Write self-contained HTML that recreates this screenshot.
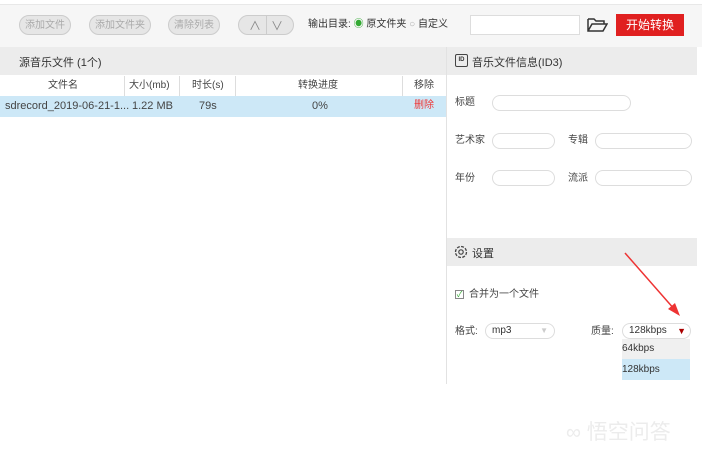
<!DOCTYPE html><html><head><meta charset="utf-8"><style>
*{margin:0;padding:0;box-sizing:border-box}
body{width:702px;height:456px;background:#fff;font-family:"Liberation Sans","Noto Sans CJK SC",sans-serif;font-size:11px;color:#333;position:relative;overflow:hidden}
.a{position:absolute}
.btn{position:absolute;top:15px;height:20px;border:1px solid #ccc;border-radius:10px;background:#e6e6e6;color:#aaa;font-size:10px;text-align:center}
.btn span{position:absolute;left:0;right:0;top:4px;line-height:12px}
.inp{position:absolute;height:16px;border:1px solid #ddd;border-radius:8px;background:#fff}
.lbl{position:absolute;font-size:10px;color:#444;line-height:1.2}
</style></head><body>
<div class="a" style="left:0;top:4px;width:702px;height:43px;background:#f6f6f6;border-top:1px solid #e8e8e8"></div>
<div class="btn" style="left:19px;width:52px"><span>添加文件</span></div>
<div class="btn" style="left:89px;width:62px"><span>添加文件夹</span></div>
<div class="btn" style="left:168px;width:52px"><span>清除列表</span></div>
<div class="btn" style="left:238px;width:56px;color:#888;font-size:12px"><span>∧ &nbsp;&nbsp;∨</span></div>
<div class="a" style="left:266px;top:16px;width:1px;height:18px;background:#ccc"></div>
<div class="lbl" style="left:308px;top:19px;color:#333">输出目录: <span style="color:#3a3">◉</span> 原文件夹 <span style="color:#aaa">○</span> 自定义</div>
<div class="a" style="left:470px;top:15px;width:110px;height:20px;border:1px solid #ddd;background:#fff"></div>
<svg class="a" style="left:586px;top:17px" width="22" height="16" viewBox="0 0 22 16"><path d="M2 2h6l2 2h8v3M2 2v12h15l4-7H6L2 14" fill="none" stroke="#333" stroke-width="1.5"/></svg>
<div class="a" style="left:616px;top:14px;width:68px;height:22px;background:#e02020;color:#fff;font-size:12px;text-align:center;line-height:22px">开始转换</div>
<div class="a" style="left:0;top:47px;width:446px;height:28px;background:#ececec"></div>
<div class="a" style="left:19px;top:54px;font-size:11px">源音乐文件 (1个)</div>
<div class="a" style="left:0;top:96px;width:446px;height:21px;background:#cde8f7"></div>
<div class="a" style="left:124px;top:76px;width:1px;height:20px;background:#ddd"></div>
<div class="a" style="left:179px;top:76px;width:1px;height:20px;background:#ddd"></div>
<div class="a" style="left:235px;top:76px;width:1px;height:20px;background:#ddd"></div>
<div class="a" style="left:402px;top:76px;width:1px;height:20px;background:#ddd"></div>
<div class="lbl" style="left:48px;top:80px">文件名</div>
<div class="lbl" style="left:129px;top:80px">大小(mb)</div>
<div class="lbl" style="left:192px;top:80px">时长(s)</div>
<div class="lbl" style="left:298px;top:80px">转换进度</div>
<div class="lbl" style="left:414px;top:80px">移除</div>
<div class="lbl" style="left:5px;top:100px;font-size:11px">sdrecord_2019-06-21-1...</div>
<div class="lbl" style="left:132px;top:100px;font-size:11px">1.22 MB</div>
<div class="lbl" style="left:199px;top:100px;font-size:11px">79s</div>
<div class="lbl" style="left:312px;top:100px;font-size:11px">0%</div>
<div class="lbl" style="left:414px;top:100px;color:#e33">删除</div>
<div class="a" style="left:446px;top:47px;width:1px;height:337px;background:#e2e2e2"></div>
<div class="a" style="left:447px;top:47px;width:250px;height:28px;background:#ececec"></div>
<div class="a" style="left:455px;top:54px;width:13px;height:13px;border:1px solid #444;border-radius:2px;font-size:6px;font-weight:bold;text-align:center;line-height:11px">ID</div>
<div class="a" style="left:472px;top:54px;font-size:11px">音乐文件信息(ID3)</div>
<div class="lbl" style="left:455px;top:97px">标题</div><div class="inp" style="left:492px;top:95px;width:139px"></div>
<div class="lbl" style="left:455px;top:135px">艺术家</div><div class="inp" style="left:492px;top:133px;width:63px"></div>
<div class="lbl" style="left:568px;top:135px">专辑</div><div class="inp" style="left:595px;top:133px;width:97px"></div>
<div class="lbl" style="left:455px;top:173px">年份</div><div class="inp" style="left:492px;top:170px;width:63px"></div>
<div class="lbl" style="left:568px;top:173px">流派</div><div class="inp" style="left:595px;top:170px;width:97px"></div>
<div class="a" style="left:447px;top:238px;width:250px;height:28px;background:#ececec"></div>
<svg class="a" style="left:454px;top:245px" width="14" height="14" viewBox="0 0 14 14"><circle cx="7" cy="7" r="5.5" fill="none" stroke="#444" stroke-width="1.3" stroke-dasharray="3 1.3"/><circle cx="7" cy="7" r="2.2" fill="none" stroke="#444" stroke-width="1.2"/></svg>
<div class="a" style="left:472px;top:245px;font-size:11px">设置</div>
<div class="a" style="left:455px;top:290px;width:9px;height:9px;border:1px solid #888;color:#3a3;font-size:8px;line-height:7px;text-align:center">✓</div>
<div class="lbl" style="left:469px;top:289px">合并为一个文件</div>
<div class="lbl" style="left:455px;top:326px">格式:</div>
<div class="inp" style="left:485px;top:323px;width:70px;font-size:10px;padding-left:6px;line-height:14px">mp3<span style="position:absolute;right:6px;color:#ccc;font-size:8px">▼</span></div>
<div class="lbl" style="left:591px;top:326px">质量:</div>
<div class="inp" style="left:622px;top:323px;width:69px;font-size:10px;padding-left:6px;line-height:14px">128kbps<span style="position:absolute;right:4px;color:#a00;font-size:9px">▼</span></div>
<div class="a" style="left:622px;top:339px;width:68px;height:20px;background:#f0f0f0;font-size:10px;line-height:20px">64kbps</div>
<div class="a" style="left:622px;top:359px;width:68px;height:21px;background:#cde8f7;font-size:10px;line-height:21px">128kbps</div>
<svg class="a" style="left:0;top:0" width="702" height="456"><line x1="625" y1="253" x2="675" y2="310" stroke="#e33" stroke-width="1.5"/><polygon points="680,316 668,309 675,303" fill="#e33"/></svg>
<div class="a" style="left:566px;top:420px;font-size:21px;color:#ececec;line-height:1.2">∞ 悟空问答</div>
</body></html>
